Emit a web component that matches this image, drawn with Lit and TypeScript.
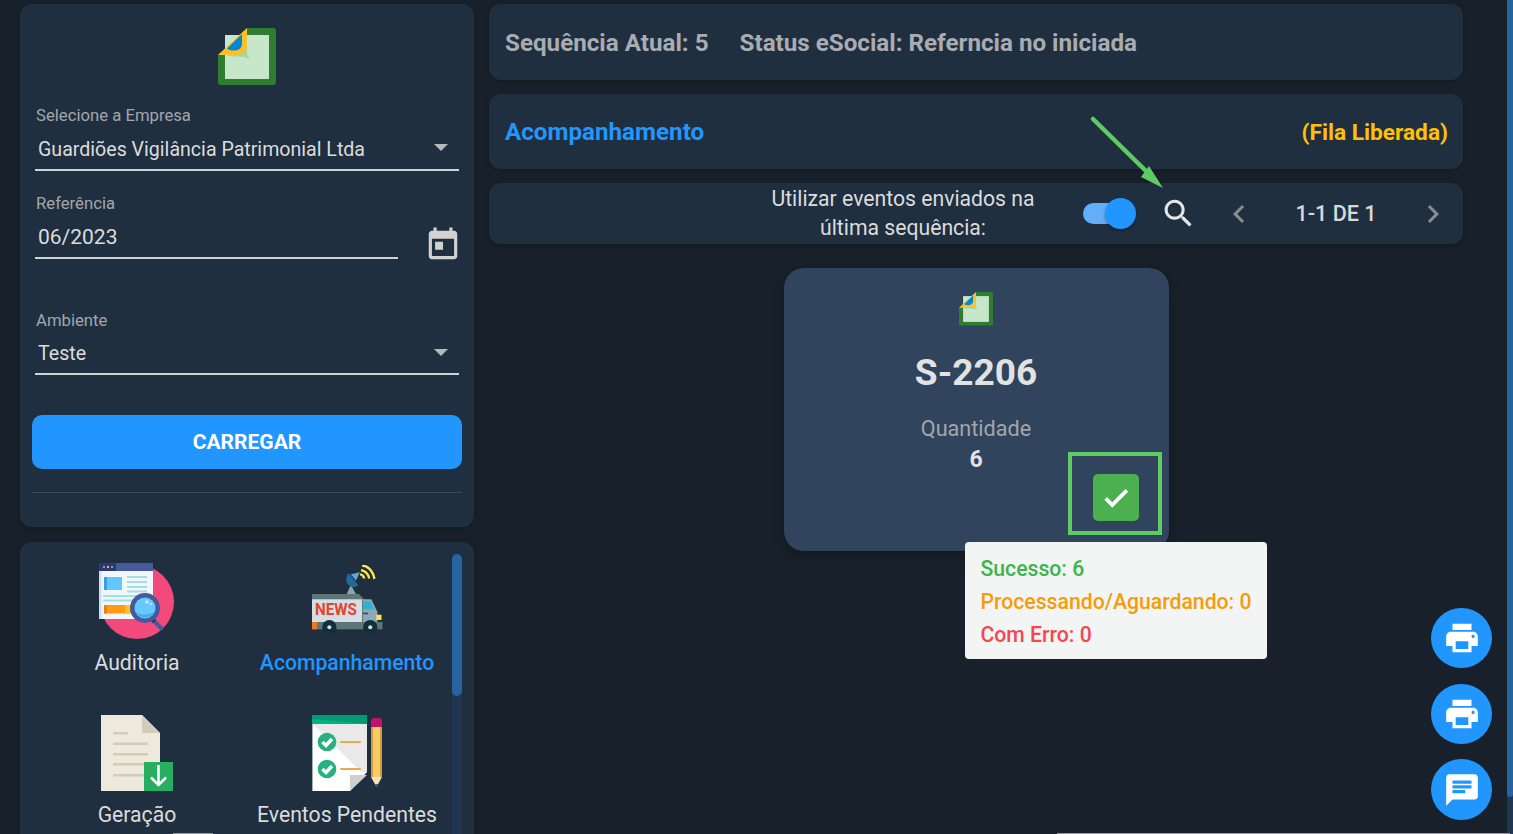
import { LitElement, html, css, svg } from "lit";
import { customElement } from "lit/decorators.js";

const esocialLogo = (size: number) => html`
  <svg width=${size} height=${size} viewBox="0 0 58 58">
    <path d="M29 0H55a3 3 0 0 1 3 3V54a3 3 0 0 1-3 3H3a3 3 0 0 1-3-3V27Z" fill="#2e7d32"></path>
    <rect x="7" y="7" width="44" height="44" fill="#c8e6c9"></rect>
    <path d="M29 4V26L32 31 25 29 10 28Z" fill="#a5d6a7"></path>
    <path d="M29 0V18C29 24 25 27 19 27H0Z" fill="#fbc02d"></path>
    <path d="M24 6V15C24 20 21 22.500 16 22.500 12.500 22.500 11 22 9 20.500Z" fill="#0288d1"></path>
  </svg>`;

const iconAuditoria = html`
  <svg width="76" height="76" viewBox="1 1 76 76">
    <circle cx="39" cy="40" r="37" fill="#f44a7b"></circle>
    <rect x="1" y="1" width="54" height="56" fill="#f2f7fc"></rect>
    <rect x="1" y="9" width="2.500" height="48" fill="#c9def2"></rect>
    <rect x="1" y="1" width="54" height="8" fill="#46599b"></rect>
    <rect x="1" y="1" width="17" height="8" fill="#2b3a74"></rect>
    <rect x="5" y="4" width="2" height="2" fill="#ef6a9a"></rect>
    <rect x="9" y="4" width="2" height="2" fill="#f5b63f"></rect>
    <rect x="13" y="4" width="2" height="2" fill="#4fc08d"></rect>
    <rect x="6" y="15" width="18" height="13" fill="#63c7ff"></rect>
    <rect x="6" y="15" width="3" height="13" fill="#3a9ee0"></rect>
    <g fill="#9fe0e3">
      <rect x="29" y="14" width="20" height="2"></rect>
      <rect x="29" y="19" width="20" height="2"></rect>
      <rect x="29" y="24" width="20" height="2"></rect>
      <rect x="29" y="28.500" width="20" height="2"></rect>
      <rect x="5" y="33" width="38" height="2"></rect>
      <rect x="5" y="37.500" width="32" height="2"></rect>
    </g>
    <rect x="6" y="43" width="26" height="8.500" fill="#ff9a16"></rect>
    <rect x="6" y="43" width="3" height="8.500" fill="#f07b10"></rect>
    <rect x="27" y="43" width="6" height="8.500" fill="#ffc21f"></rect>
    <path d="M51 57l3-3 12 12-3 3Z" fill="#46599b"></path>
    <path d="M51 57l3-3 4 4-3 3Z" fill="#232f63"></path>
    <circle cx="47" cy="46" r="15" fill="#46599b"></circle>
    <circle cx="47" cy="46" r="10.500" fill="#66c9ff"></circle>
    <path d="M38 50a10.500 10.500 0 0 0 19-1c-4 4-13 5-19 1Z" fill="#43aeea"></path>
    <circle cx="49" cy="40" r="1.700" fill="#c7edff"></circle>
    <circle cx="53" cy="42" r="1" fill="#c7edff"></circle>
  </svg>`;

const iconNews = html`
  <svg class="news" width="71" height="70.500" viewBox="1 1 69.500 68" preserveAspectRatio="none">
    <path d="M35 29l4-9 5 9Z" fill="#8fa4ad"></path>
    <path d="M37 9c-4 4-3 10 2 13 3 1 6 0 7-2Z" fill="#1f6a9a"></path>
    <path d="M39 10l9-2-4 8Z" fill="#5fa8cf"></path>
    <g fill="none" stroke="#fde74c" stroke-width="2.300">
      <path d="M50 1.500c5 0 11 5 12 13"></path>
      <path d="M49 6c3 0 7 3 8 8"></path>
      <path d="M48 10c2 0 4 2 4 4"></path>
    </g>
    <path d="M1 29H47L53 35V56H1Z" fill="#5f7677"></path>
    <path d="M1 34H50V56H1Z" fill="#d3dee5"></path>
    <path d="M51 34h8l6 12v10H51Z" fill="#8fa9b8"></path>
    <path d="M51 36h7l4 8H51Z" fill="#2db4d0"></path>
    <rect x="51" y="47" width="5" height="1.500" fill="#2f4650"></rect>
    <rect x="64" y="49" width="5" height="5" fill="#fde74c"></rect>
    <rect x="1" y="56" width="69" height="7" fill="#5f7677"></rect>
    <rect x="1" y="56" width="5" height="7" fill="#ea7a1e"></rect>
    <text class="news-word" x="4" y="49.700" textLength="41" lengthAdjust="spacingAndGlyphs">NEWS</text>
    <circle cx="18" cy="61" r="7" fill="#12303c"></circle>
    <circle cx="18" cy="61" r="2" fill="#d3dee5"></circle>
    <circle cx="58" cy="61" r="7" fill="#12303c"></circle>
    <circle cx="58" cy="61" r="2" fill="#d3dee5"></circle>
  </svg>`;

const iconGeracao = html`
  <svg width="72" height="76" viewBox="0 0 72 76">
    <path d="M0 0H41L59 18V76H0Z" fill="#ede9dc"></path>
    <path d="M41 0L59 18H41Z" fill="#d2cdb8"></path>
    <g fill="#d2cdb8">
      <rect x="12" y="17" width="15" height="2.500"></rect>
      <rect x="12" y="27.500" width="35" height="2.500"></rect>
      <rect x="12" y="38" width="35" height="2.500"></rect>
      <rect x="12" y="48" width="35" height="2.500"></rect>
      <rect x="12" y="59" width="35" height="2.500"></rect>
    </g>
    <rect x="43" y="47" width="29" height="29" fill="#27ae60"></rect>
    <path d="M57.500 50V70M50 62.500L57.500 70 65 62.500" fill="none" stroke="#fff" stroke-width="2.500"></path>
  </svg>`;

const iconPendentes = html`
  <svg width="70" height="76" viewBox="0 0 70 76">
    <path d="M0 0H55V57L38 76H0Z" fill="#fff"></path>
    <path d="M0 8H55V57H49Z" fill="#e9e9ea"></path>
    <rect x="0" y="8" width="1" height="68" fill="#9fb0b5"></rect>
    <path d="M0 0H55V9H0Z" fill="#00b37f"></path>
    <path d="M0 0H55V9L0 4Z" fill="#009b72"></path>
    <path d="M38 76V60H55Z" fill="#cfcfd0"></path>
    <circle cx="15" cy="27" r="9.300" fill="#26b27e"></circle>
    <path d="M10.500 27l3.500 3.500 6-6.500" fill="none" stroke="#fff" stroke-width="3.500"></path>
    <circle cx="15" cy="54" r="9.300" fill="#26b27e"></circle>
    <path d="M10.500 54l3.500 3.500 6-6.500" fill="none" stroke="#fff" stroke-width="3.500"></path>
    <rect x="28" y="26" width="21" height="2" rx="1" fill="#eba84f"></rect>
    <rect x="28" y="53" width="21" height="2" rx="1" fill="#eba84f"></rect>
    <path d="M59 12V6a3 3 0 0 1 3-3h5a3 3 0 0 1 3 3V12Z" fill="#c2126c"></path>
    <rect x="59" y="12" width="11" height="50" fill="#f9cb60"></rect>
    <rect x="59" y="12" width="2" height="50" fill="#d79b3f"></rect>
    <rect x="68" y="12" width="2" height="50" fill="#d79b3f"></rect>
    <path d="M59 62H70L64.500 72Z" fill="#efe4bf"></path>
    <path d="M63 69H66L64.500 72Z" fill="#4d4a33"></path>
  </svg>`;

const printerPath = svg`<path d="M19 8H5c-1.660 0-3 1.340-3 3v6h4v4h12v-4h4v-6c0-1.660-1.340-3-3-3zm-3 11H8v-5h8v5zm3-7c-.550 0-1-.450-1-1s.450-1 1-1 1 .450 1 1-.450 1-1 1zm-1-9H6v4h12V3z"></path>`;
const chatPath = svg`<path d="M20 2H4c-1.100 0-1.990.900-1.990 2L2 22l4-4h14c1.100 0 2-.900 2-2V4c0-1.100-.900-2-2-2zM6 9h12v2H6V9zm8 5H6v-2h8v2zm4-6H6V6h12v2z"></path>`;

@customElement("menu-tile")
class MenuTile extends LitElement {
  static properties = {
    label: { type: String },
    active: { type: Boolean, reflect: true }
  };

  static styles = css`
    :host {
      display: flex;
      flex-direction: column;
      align-items: center;
      color: #dcdcdc;
      font-size: 21.200px;
      line-height: 24px;
    }
    :host([active]) {
      color: #2196ff;
      font-weight: 500;
    }
    .pic {
      height: 85px;
      display: flex;
      align-items: flex-end;
      justify-content: center;
      margin-bottom: 12px;
    }
  `;

  declare label: string;
  declare active: boolean;

  render() {
    return html`<div class="pic"><slot></slot></div><span>${this.label}</span>`;
  }
}

@customElement("app-root")
class AppRoot extends LitElement {
  static styles = css`
    :host {
      display: block;
      position: relative;
      height: 834px;
      overflow: hidden;
      background: #18212b;
      font-family: Roboto, "Liberation Sans", sans-serif;
      color: #dcdcdc;
    }
    .page {
      display: flex;
      gap: 15px;
      padding: 4px 0 0 20px;
      height: 100%;
      box-sizing: border-box;
    }
    .left {
      width: 454px;
      flex: none;
      display: flex;
      flex-direction: column;
      gap: 15px;
    }
    .right {
      width: 974px;
      flex: none;
      display: flex;
      flex-direction: column;
    }
    .panel {
      background: #202f40;
      border-radius: 12px;
      box-shadow: 0 2px 6px rgba(0, 0, 0, 0.25);
    }
    .form {
      height: 523px;
      box-sizing: border-box;
      padding: 24px 15px 0;
      display: flex;
      flex-direction: column;
    }
    .logo {
      align-self: center;
      height: 58px;
      margin-bottom: 20px;
    }
    .field-label {
      font-size: 16.700px;
      line-height: 19px;
      color: #a2a6ab;
      margin-left: 1px;
    }
    .field {
      display: flex;
      align-items: center;
      justify-content: space-between;
      height: 40px;
      padding: 4px 3px 0;
      border-bottom: 2px solid #d2d2d2;
      font-size: 19.600px;
      box-sizing: content-box;
      color: #dcdcdc;
    }
    .field.date {
      font-size: 21px;
    }
    .field.short {
      height: 39px;
    }
    .caret {
      width: 0;
      height: 0;
      border-left: 7.500px solid transparent;
      border-right: 7.500px solid transparent;
      border-top: 7px solid #b8b8b8;
      margin: 0 8px 3px 0;
    }
    .f2 {
      margin-top: 23px;
    }
    .date-row {
      display: flex;
      align-items: flex-end;
      justify-content: space-between;
    }
    .date-row .grow {
      width: 363px;
    }
    .date-row svg {
      fill: #d2d2d2;
      margin: 0 -3px -5px 0;
    }
    .f3 {
      margin-top: 52px;
    }
    .load {
      margin: 40px -3px 0;
      height: 54px;
      border-radius: 10px;
      background: #2196ff;
      color: #fff;
      font-size: 21px;
      font-weight: 700;
      display: flex;
      align-items: center;
      justify-content: center;
    }
    .rule {
      margin: 23px -3px 0;
      height: 1px;
      background: #3d4a5a;
    }
    .menu {
      flex: 1;
      display: flex;
      border-radius: 12px 12px 0 0;
      position: relative;
      overflow: hidden;
      padding: 12px 0 0 12px;
    }
    .tiles {
      display: grid;
      grid-template-columns: 210px 210px;
      grid-auto-rows: 152px;
      justify-items: center;
    }
    .news {
      margin-bottom: 4px;
    }
    .news-word {
      font-family: Roboto, "Liberation Sans", sans-serif;
      font-size: 16px;
      font-weight: 700;
      fill: #e8432a;
    }
    .thumb-track {
      width: 10px;
      background: #203550;
      border-radius: 5px 5px 0 0;
      flex: none;
    }
    .thumb {
      height: 142px;
      background: #27639f;
      border-radius: 5px;
    }
    .bar {
      display: flex;
      align-items: center;
      box-sizing: border-box;
    }
    .status {
      height: 76px;
      padding: 2px 16px 0;
      gap: 31px;
      font-size: 24.200px;
      font-weight: 700;
      color: #a9acb0;
    }
    .track {
      height: 75px;
      margin-top: 14px;
      padding: 0 15px 0 16px;
      justify-content: space-between;
      font-weight: 700;
    }
    .track .blue {
      color: #2196ff;
      font-size: 24.200px;
    }
    .track .gold {
      color: #ffc107;
      font-size: 22.700px;
      padding-top: 1px;
    }
    .tools {
      height: 61px;
      margin-top: 14px;
      border-radius: 12px;
    }
    .tools-label {
      width: 320px;
      flex: none;
      margin-left: 254px;
      text-align: center;
      font-size: 21.200px;
      line-height: 29px;
      color: #dcdcdc;
      margin-top: -1px;
    }
    .switch {
      margin-left: 20px;
      width: 53px;
      height: 31px;
      position: relative;
      flex: none;
    }
    .switch .rail {
      position: absolute;
      left: 0;
      top: 5px;
      width: 48px;
      height: 21px;
      border-radius: 11px;
      background: #62aef8;
    }
    .switch .knob {
      position: absolute;
      right: 0;
      top: 0;
      width: 31px;
      height: 31px;
      border-radius: 50%;
      background: #2196ff;
      box-shadow: 0 2px 3px rgba(0, 0, 0, 0.35);
    }
    .search {
      margin-left: 24px;
      fill: #e6e6e6;
      flex: none;
    }
    .chev {
      fill: #8a8d90;
      flex: none;
    }
    .pager {
      display: flex;
      align-items: center;
      margin-left: 24px;
      flex: none;
    }
    .pager span {
      width: 158px;
      text-align: center;
      font-size: 21.600px;
      font-weight: 500;
      color: #d8d8d8;
    }
    .stage {
      flex: 1;
      display: flex;
      justify-content: center;
      padding-top: 24px;
    }
    .card {
      width: 385px;
      height: 283px;
      box-sizing: border-box;
      padding-top: 24px;
      background: #30455d;
      border-radius: 20px;
      box-shadow: 0 4px 14px rgba(0, 0, 0, 0.3);
      display: flex;
      flex-direction: column;
      align-items: center;
      position: relative;
    }
    .card h2 {
      margin: 25px 0 0;
      font-size: 37px;
      line-height: 44px;
      font-weight: 700;
      color: #e2e2e2;
    }
    .qty-label {
      margin-top: 21px;
      font-size: 21.600px;
      line-height: 26px;
      color: #a2a6ab;
    }
    .qty {
      margin-top: 5px;
      font-size: 23px;
      line-height: 26px;
      font-weight: 700;
      color: #e2e2e2;
    }
    .check {
      position: absolute;
      left: 309px;
      top: 206px;
      width: 46px;
      height: 47px;
      border-radius: 5px;
      background: #4caf50;
      display: flex;
      align-items: center;
      justify-content: center;
    }
    .check svg {
      fill: #fff;
      stroke: #fff;
      stroke-width: 1;
    }
    .mark {
      position: absolute;
      left: 284px;
      top: 184px;
      width: 94px;
      height: 83px;
      box-sizing: border-box;
      border: 4px solid #5fcb63;
    }
    .tip {
      position: absolute;
      left: 965px;
      top: 542px;
      width: 302px;
      height: 117px;
      box-sizing: border-box;
      padding: 10px 0 0 15.500px;
      border-radius: 4px;
      background: #f3f4f4;
      font-size: 21.200px;
      line-height: 33px;
      font-weight: 500;
      z-index: 3;
      white-space: nowrap;
    }
    .ok {
      color: #3cb54a;
    }
    .wait {
      color: #f59c0a;
    }
    .err {
      color: #f44653;
    }
    .arrow {
      position: absolute;
      left: 1085px;
      top: 110px;
      z-index: 2;
    }
    .fab {
      position: absolute;
      left: 1431px;
      width: 61px;
      height: 60px;
      border-radius: 50%;
      background: #2196ff;
      display: flex;
      align-items: center;
      justify-content: center;
      fill: #fff;
      z-index: 2;
    }
    .fab.p1 {
      top: 608px;
    }
    .fab.p2 {
      top: 684px;
    }
    .fab.p3 {
      top: 759px;
      height: 61px;
    }
    .scroll {
      position: absolute;
      right: 0;
      top: 0;
      bottom: 0;
      width: 6px;
      background: #203550;
    }
    .scroll div {
      height: 797px;
      background: #27639f;
      border-radius: 0 0 3px 3px;
    }
    .edge {
      position: absolute;
      bottom: 0;
      height: 1px;
      background: #9a9a9a;
      z-index: 4;
    }
    .edge.long {
      left: 1057px;
      right: 3px;
    }
    .edge.short {
      left: 173px;
      width: 40px;
    }
  `;

  render() {
    return html`
      <div class="page">
        <div class="left">
          <div class="panel form">
            <div class="logo">${esocialLogo(58)}</div>
            <div class="field-label">Selecione a Empresa</div>
            <div class="field">Guardiões Vigilância Patrimonial Ltda<i class="caret"></i></div>
            <div class="date-row f2">
              <div class="grow">
                <div class="field-label">Referência</div>
                <div class="field date">06/2023</div>
              </div>
              <svg width="38" height="38" viewBox="0 0 24 24"><path d="M19 3h-1V1h-2v2H8V1H6v2H5c-1.110 0-1.990.900-1.990 2L3 19c0 1.100.890 2 2 2h14c1.100 0 2-.900 2-2V5c0-1.100-.900-2-2-2zm0 16H5V8h14v11zM7 10h5v5H7z"></path></svg>
            </div>
            <div class="field-label f3">Ambiente</div>
            <div class="field short">Teste<i class="caret"></i></div>
            <div class="load">CARREGAR</div>
            <div class="rule"></div>
          </div>
          <div class="panel menu">
            <div class="tiles">
              <menu-tile label="Auditoria">${iconAuditoria}</menu-tile>
              <menu-tile label="Acompanhamento" active>${iconNews}</menu-tile>
              <menu-tile label="Geração">${iconGeracao}</menu-tile>
              <menu-tile label="Eventos Pendentes">${iconPendentes}</menu-tile>
            </div>
            <div class="thumb-track"><div class="thumb"></div></div>
          </div>
        </div>
        <div class="right">
          <div class="panel bar status">
            <span>Sequência Atual: 5</span>
            <span>Status eSocial: Referncia no iniciada</span>
          </div>
          <div class="panel bar track">
            <span class="blue">Acompanhamento</span>
            <span class="gold">(Fila Liberada)</span>
          </div>
          <div class="panel bar tools">
            <div class="tools-label">Utilizar eventos enviados na<br />última sequência:</div>
            <div class="switch"><div class="rail"></div><div class="knob"></div></div>
            <svg class="search" width="37" height="37" viewBox="0 0 24 24"><path d="M15.500 14h-.790l-.280-.270C15.410 12.590 16 11.110 16 9.500 16 5.910 13.090 3 9.500 3S3 5.910 3 9.500 5.910 16 9.500 16c1.610 0 3.090-.590 4.230-1.570l.270.280v.790l5 4.990L20.490 19l-4.990-5zm-6 0C7.010 14 5 11.990 5 9.500S7.010 5 9.500 5 14 7.010 14 9.500 11.990 14 9.500 14z"></path></svg>
            <div class="pager">
              <svg class="chev" width="36" height="36" viewBox="0 0 24 24"><path d="M15.410 7.410L14 6l-6 6 6 6 1.410-1.410L10.830 12z"></path></svg>
              <span>1-1 DE 1</span>
              <svg class="chev" width="36" height="36" viewBox="0 0 24 24"><path d="M10 6L8.590 7.410 13.170 12l-4.580 4.590L10 18l6-6z"></path></svg>
            </div>
          </div>
          <div class="stage">
            <div class="card">
              ${esocialLogo(34)}
              <h2>S-2206</h2>
              <div class="qty-label">Quantidade</div>
              <div class="qty">6</div>
              <div class="mark"></div>
              <div class="check">
                <svg width="30" height="30" viewBox="0 0 24 24"><path d="M9 16.170L4.830 12l-1.420 1.410L9 19 21 7l-1.410-1.410z"></path></svg>
              </div>
            </div>
          </div>
        </div>
      </div>
      <div class="tip">
        <div class="ok">Sucesso: 6</div>
        <div class="wait">Processando/Aguardando: 0</div>
        <div class="err">Com Erro: 0</div>
      </div>
      <svg class="arrow" width="90" height="90" viewBox="0 0 90 90">
        <path d="M8 9L62 62" stroke="#5fcb63" stroke-width="4.500" stroke-linecap="round"></path>
        <path d="M78 78L56 67 64 56Z" fill="#5fcb63"></path>
      </svg>
      <div class="fab p1"><svg width="38" height="38" viewBox="0 0 24 24">${printerPath}</svg></div>
      <div class="fab p2"><svg width="38" height="38" viewBox="0 0 24 24">${printerPath}</svg></div>
      <div class="fab p3"><svg width="38" height="38" viewBox="0 0 24 24">${chatPath}</svg></div>
      <div class="scroll"><div></div></div>
      <div class="edge long"></div>
      <div class="edge short"></div>
    `;
  }
}

export { AppRoot, MenuTile };
